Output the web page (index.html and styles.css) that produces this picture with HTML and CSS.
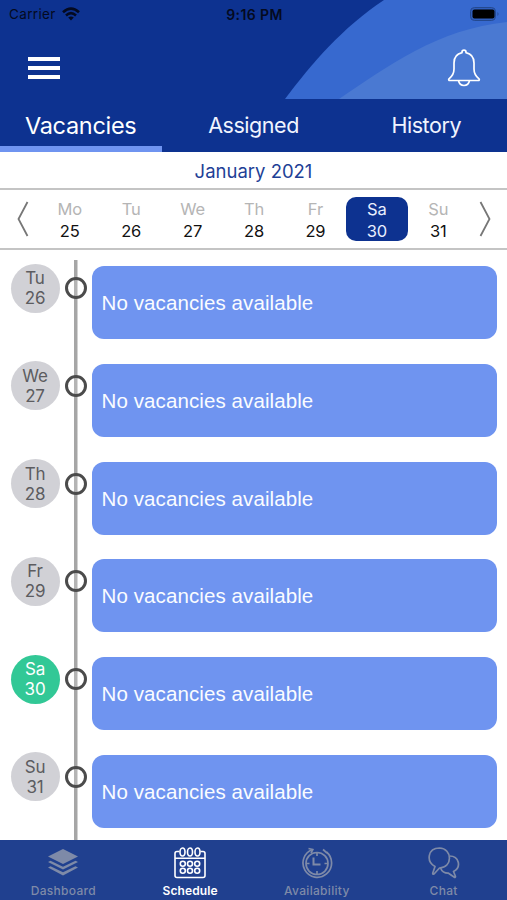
FILE: index.html
```html
<!DOCTYPE html>
<html lang="en">

<head>
    <meta charset="UTF-8">
    <meta name="viewport" content="width=device-width, initial-scale=1.0">
    <title>Schedule</title>
    <link rel="stylesheet" href="styles.css">
</head>

<body>
    <header class="hero">
        <svg class="hero-bg" viewBox="0 0 507 99">
            <path d="M285 99C312 63 342 28 384 0H507V99Z" fill="#3769cf"/>
            <path d="M339 99C388 66 438 29 507 22V99Z" fill="#4a79d2"/>
        </svg>
        <div class="status">
            <div class="carrier">
                <span>Carrier</span>
                <svg width="18" height="14" viewBox="0 0 18 14">
                    <g fill="none" stroke="#040a20" stroke-width="2.6">
                        <path d="M1 5.2Q9-2 17 5.2"/>
                        <path d="M4 8.4Q9 4 14 8.4"/>
                    </g>
                    <path d="M6.2 10.6Q9 8.2 11.8 10.6L9 13.4Z" fill="#040a20"/>
                </svg>
            </div>
            <div class="time">9:16 PM</div>
            <svg class="battery" width="30" height="14" viewBox="0 0 30 14">
                <rect x=".5" y=".5" width="25" height="13" rx="4" fill="#2f5dbb" stroke="#24498f"/>
                <rect x="2.5" y="2.5" width="22" height="9" rx="2" fill="#000"/>
                <path d="M27.5 5Q29.5 7 27.5 9Z" fill="#24498f"/>
            </svg>
        </div>
        <div class="toolbar">
            <div class="menu"><i></i><i></i><i></i></div>
            <svg width="34" height="38" viewBox="0 0 34 38">
                <g fill="none" stroke="#fff" stroke-width="1.7" stroke-linejoin="round">
                    <path d="M15 3.7V3Q15 1.2 17 1.2T19 3V3.7C24 4.8 27 8.5 27 14V20C27 25 28.5 27 32 29.8Q33 31.5 31 31.5H3Q1 31.5 2 29.8C5.5 27 7 25 7 20V14C7 8.5 10 4.8 15 3.7Z"/>
                    <path d="M11.5 31.5Q12.500 36.500 17 36.500T22.500 31.500"/>
                </g>
            </svg>
        </div>
    </header>

    <nav class="tabs">
        <div class="tab active">Vacancies</div>
        <div class="tab">Assigned</div>
        <div class="tab">History</div>
    </nav>

    <div class="month">January 2021</div>

    <div class="week">
        <svg class="arrow" viewBox="0 0 12 36"><path d="M10.500 1L1.500 18L10.500 35"/></svg>
        <div class="days">
            <div class="day"><span>Mo</span>25</div>
            <div class="day"><span>Tu</span>26</div>
            <div class="day"><span>We</span>27</div>
            <div class="day"><span>Th</span>28</div>
            <div class="day"><span>Fr</span>29</div>
            <div class="day selected"><span>Sa</span>30</div>
            <div class="day"><span>Su</span>31</div>
        </div>
        <svg class="arrow" viewBox="0 0 12 36"><path d="M1.500 1L10.500 18L1.500 35"/></svg>
    </div>

    <main class="timeline">
        <div class="row">
            <div class="badge">Tu<br>26</div>
            <div class="ring"></div>
            <div class="card">No vacancies available</div>
        </div>
        <div class="row">
            <div class="badge">We<br>27</div>
            <div class="ring"></div>
            <div class="card">No vacancies available</div>
        </div>
        <div class="row">
            <div class="badge">Th<br>28</div>
            <div class="ring"></div>
            <div class="card">No vacancies available</div>
        </div>
        <div class="row">
            <div class="badge">Fr<br>29</div>
            <div class="ring"></div>
            <div class="card">No vacancies available</div>
        </div>
        <div class="row">
            <div class="badge today">Sa<br>30</div>
            <div class="ring"></div>
            <div class="card">No vacancies available</div>
        </div>
        <div class="row">
            <div class="badge">Su<br>31</div>
            <div class="ring"></div>
            <div class="card">No vacancies available</div>
        </div>
    </main>

    <footer class="bottom">
        <div class="item">
            <svg width="32" height="32" viewBox="0 0 32 32" fill="currentColor">
                <path d="M16 2L31 9.500L16 17L1 9.500Z"/>
                <path d="M1 15L3.500 13.700L16 19.800L28.500 13.700L31 15L16 22.600Z"/>
                <path d="M1 20.500L3.500 19.200L16 25.300L28.500 19.200L31 20.500L16 28.500Z"/>
            </svg>
            <span>Dashboard</span>
        </div>
        <div class="item on">
            <svg width="32" height="32" viewBox="0 0 32 32" fill="none" stroke="currentColor" stroke-width="1.600">
                <path d="M5.500 4.500H3Q1 4.500 1 6.500V28.500Q1 30.500 3 30.500H29Q31 30.500 31 28.500V6.500Q31 4.500 29 4.500H26.500M1 11.200H31"/>
                <ellipse cx="8.500" cy="5" rx="2.500" ry="4"/>
                <ellipse cx="16" cy="5" rx="2.500" ry="4"/>
                <ellipse cx="23.500" cy="5" rx="2.500" ry="4"/>
                <circle cx="8.800" cy="16.700" r="2.500"/>
                <circle cx="16" cy="16.700" r="2.500"/>
                <circle cx="23.200" cy="16.700" r="2.500"/>
                <circle cx="8.800" cy="23.700" r="2.500"/>
                <circle cx="16" cy="23.700" r="2.500"/>
                <circle cx="23.200" cy="23.700" r="2.500"/>
            </svg>
            <span>Schedule</span>
        </div>
        <div class="item">
            <svg width="32" height="32" viewBox="0 0 32 32" fill="none" stroke="currentColor" stroke-width="1.700">
                <path d="M11.500 2.500A14.300 14.300 0 1 0 25.500 5"/>
                <path d="M7.500 1.500L11.800 2.500L10 6"/>
                <path d="M22 2.500L26 6"/>
                <circle cx="16" cy="16.500" r="11"/>
                <path d="M16 5.500V9M16 24V27.500M5 16.500H8.500M23.500 16.500H27"/>
                <path d="M12.500 10.500V17.500H19.500" stroke-width="2"/>
            </svg>
            <span>Availability</span>
        </div>
        <div class="item">
            <svg width="32" height="32" viewBox="0 0 32 32" fill="none" stroke="currentColor" stroke-width="1.700" stroke-linejoin="round">
                <path d="M7 19.500C-2 14.500-.5 1.200 11.500 1C24.500 1.500 25 20.500 11.500 21L6 27Q4.500 27.500 4.800 26Z"/>
                <path d="M21.500 9C31.500 9 33.500 20.500 25.500 24.500L27.500 29.500Q27.500 31 26 30L20.500 26.200C17 26.300 14 25 12.500 21"/>
            </svg>
            <span>Chat</span>
        </div>
    </footer>
</body>

</html>
```
FILE: styles.css
```css
* {
    box-sizing: border-box;
}

body {
    margin: 0;
    width: 507px;
    height: 900px;
    display: flex;
    flex-direction: column;
    overflow: hidden;
    background: #fff;
    font-family: Inter, "Liberation Sans", sans-serif;
}

.hero {
    position: relative;
    height: 99px;
    background: #0d3290;
}

.hero-bg {
    position: absolute;
    top: 0;
    left: 0;
    width: 507px;
    height: 99px;
}

.status {
    position: relative;
    display: grid;
    grid-template-columns: 1fr auto 1fr;
    align-items: center;
    height: 28px;
    padding: 0 7px 0 9px;
    font-size: 13.5px;
    color: #040a20;
}

.carrier {
    display: flex;
    align-items: center;
    gap: 6px;
    letter-spacing: 0.35px;
}

.time {
    font-weight: 600;
    font-size: 14px;
    letter-spacing: 0.4px;
}

.battery {
    justify-self: end;
}

.toolbar {
    position: relative;
    display: flex;
    justify-content: space-between;
    align-items: center;
    height: 82px;
    margin-top: -1px;
    padding: 0 26px 0 28px;
}

.menu {
    display: flex;
    flex-direction: column;
    gap: 5px;
}

.menu i {
    width: 32px;
    height: 4px;
    background: #fff;
}

.tabs {
    display: flex;
    justify-content: space-between;
    height: 53px;
    background: #0d3290;
}

.tab {
    width: 161.5px;
    font-size: 21.5px;
    line-height: 53px;
    letter-spacing: -0.45px;
    text-align: center;
    color: #f0f4ff;
}

.tab.active {
    border-bottom: 6px solid #6f94f0;
    font-size: 23.5px;
    letter-spacing: -0.3px;
    color: #fff;
}

.month {
    height: 38px;
    border-bottom: 2px solid #c4c4c4;
    font-size: 18.5px;
    line-height: 38px;
    text-align: center;
    color: #1e3f96;
}

.week {
    display: flex;
    align-items: center;
    justify-content: space-between;
    height: 60px;
    padding: 0 16px 0 17px;
    border-bottom: 2px solid #c4c4c4;
}

.arrow {
    width: 12px;
    height: 36px;
    fill: none;
    stroke: #777;
    stroke-width: 1.8;
}

.days {
    display: flex;
    width: 430px;
}

.day {
    flex: 1;
    height: 44px;
    padding-top: 1px;
    border-radius: 10px;
    font-size: 16.5px;
    line-height: 22px;
    letter-spacing: -0.2px;
    text-align: center;
    color: #111;
}

.day span {
    display: block;
    color: #b5b5b5;
}

.day.selected {
    background: #0d3290;
}

.day.selected,
.day.selected span {
    color: #e9efff;
}

.timeline {
    flex: 1;
    margin-top: 10px;
    overflow: hidden;
    background: linear-gradient(#a6a6a6, #a6a6a6) 74px 0 / 3.5px 100% no-repeat;
}

.row {
    display: flex;
    height: 97.75px;
    padding-left: 10.5px;
}

.badge {
    width: 49px;
    height: 49px;
    margin-top: 3.5px;
    padding-top: 4.5px;
    border-radius: 50%;
    background: #d1d1d6;
    font-size: 17px;
    line-height: 20px;
    letter-spacing: -0.2px;
    text-align: center;
    color: #5c5c60;
}

.badge.today {
    background: #32c896;
    color: #fff;
}

.ring {
    width: 22px;
    height: 22px;
    margin: 17px 5px 0;
    border: 3px solid #4b4b4b;
    border-radius: 50%;
    background: linear-gradient(#b4b4b4, #b4b4b4) center / 3.5px 100% no-repeat #fff;
}

.card {
    width: 405.5px;
    height: 73px;
    margin-top: 6px;
    padding-left: 10px;
    border-radius: 12px;
    background: #6f94f0;
    font-family: "Liberation Sans", Arial, sans-serif;
    font-size: 20.5px;
    line-height: 74px;
    letter-spacing: 0.1px;
    color: #fafcff;
}

.bottom {
    display: flex;
    height: 60px;
    background: #20408f;
}

.item {
    flex: 1;
    display: flex;
    flex-direction: column;
    align-items: center;
    padding-top: 7px;
    font-size: 12px;
    font-weight: 500;
    line-height: 14px;
    letter-spacing: 0.3px;
    color: #7e8aa8;
}

.item span {
    margin-top: 5px;
}

.item.on {
    font-weight: 600;
    letter-spacing: 0.1px;
    color: #fff;
}
```
